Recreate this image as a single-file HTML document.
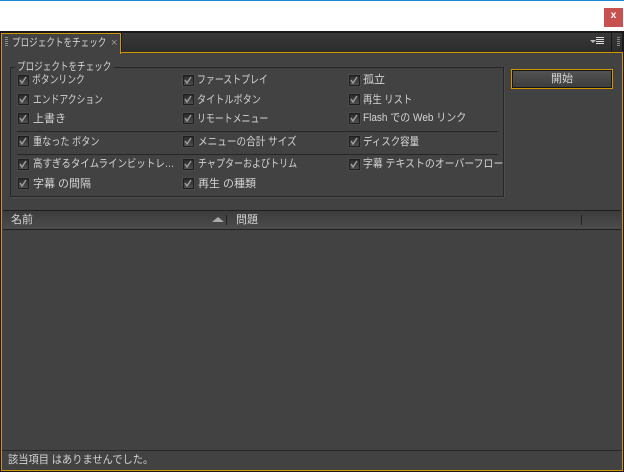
<!DOCTYPE html>
<html><head><meta charset="utf-8"><style>
html,body{margin:0;padding:0;background:#fff}
#r{position:relative;width:624px;height:472px;overflow:hidden;background:#fff;font-family:"Liberation Sans","WenQuanYi Zen Hei","Noto Sans CJK JP",sans-serif;font-size:11px;color:#d4d4d4}
#r div{position:absolute;box-sizing:border-box}
.t{white-space:nowrap;line-height:14px;height:14px;transform-origin:0 0}
.c{width:11px;height:11px;background:linear-gradient(#2a2a2a,#4e4e4e);border:1px solid #1f1f1f;box-shadow:0 0 0 1px #4a4a4a}
.c svg{position:absolute;left:0;top:0}
</style></head><body><div id="r">
<div style="left:0;top:0;width:624px;height:1px;background:#1a87d9"></div>
<div style="left:604px;top:8px;width:19px;height:19px;background:#c75050;color:#fff;font:bold 10px/18px 'Liberation Mono',monospace;text-align:center">x</div>
<div style="left:0;top:31px;width:624px;height:441px;background:#1a1a1a"></div>
<div style="left:122px;top:33px;width:500px;height:19px;background:linear-gradient(#383838,#2c2c2c)"></div>
<div style="left:611px;top:33px;width:1px;height:19px;background:#161616"></div>
<div style="left:1px;top:52px;width:622px;height:419px;background:#424242;border:1px solid #d39500"></div>
<div style="left:1px;top:33px;width:120px;height:21px;background:#424242;border:1px solid #d39500;border-bottom:0"></div>
<div style="left:5px;top:37px;width:3px;height:10px;background:repeating-linear-gradient(#8a8a8a 0 1px,transparent 1px 2px)"></div>
<div class="t" style="left:12px;top:36px;transform:scaleX(.78)">プロジェクトをチェック</div>
<div class="t" style="left:111px;top:36px;color:#9a9a9a">×</div>
<div style="left:590px;top:40px;width:0;height:0;border:3px solid transparent;border-top:3px solid #bbb"></div>
<div style="left:596px;top:37px;width:8px;height:8px;background:repeating-linear-gradient(#ddd 0 1px,#333 1px 2px)"></div>
<div style="left:617px;top:37px;width:3px;height:10px;background:repeating-linear-gradient(#888 0 1px,transparent 1px 2px)"></div>

<div style="left:10px;top:67px;width:494px;height:130px;border:1px solid #262626;box-shadow:1px 1px 0 #4e4e4e"></div>
<div style="left:15px;top:62px;width:99px;height:10px;background:#424242"></div>
<div class="t" style="left:17px;top:60px;transform:scaleX(.78)">プロジェクトをチェック</div>
<div style="left:17px;top:131px;width:481px;height:1px;background:#262626"></div>
<div style="left:17px;top:154px;width:481px;height:1px;background:#262626"></div>

<div class="c" style="left:18px;top:75px"><svg width="9" height="9"><path d="M1 4l2 3 4-6" fill="none" stroke="#a0a0a0" stroke-width="1.4"/></svg></div><div class="t" style="left:32px;top:73px;transform:scaleX(.8)">ボタンリンク</div>
<div class="c" style="left:18px;top:94px"><svg width="9" height="9"><path d="M1 4l2 3 4-6" fill="none" stroke="#a0a0a0" stroke-width="1.4"/></svg></div><div class="t" style="left:33px;top:93px;transform:scaleX(.8)">エンドアクション</div>
<div class="c" style="left:18px;top:113px"><svg width="9" height="9"><path d="M1 4l2 3 4-6" fill="none" stroke="#a0a0a0" stroke-width="1.4"/></svg></div><div class="t" style="left:33px;top:112px">上書き</div>
<div class="c" style="left:18px;top:136px"><svg width="9" height="9"><path d="M1 4l2 3 4-6" fill="none" stroke="#a0a0a0" stroke-width="1.4"/></svg></div><div class="t" style="left:33px;top:135px;transform:scaleX(.83)">重なった ボタン</div>
<div class="c" style="left:18px;top:159px"><svg width="9" height="9"><path d="M1 4l2 3 4-6" fill="none" stroke="#a0a0a0" stroke-width="1.4"/></svg></div><div class="t" style="left:33px;top:157px;transform:scaleX(.86)">高すぎるタイムラインビットレ…</div>
<div class="c" style="left:18px;top:178px"><svg width="9" height="9"><path d="M1 4l2 3 4-6" fill="none" stroke="#a0a0a0" stroke-width="1.4"/></svg></div><div class="t" style="left:33px;top:177px">字幕 の間隔</div>

<div class="c" style="left:183px;top:75px"><svg width="9" height="9"><path d="M1 4l2 3 4-6" fill="none" stroke="#a0a0a0" stroke-width="1.4"/></svg></div><div class="t" style="left:197px;top:73px;transform:scaleX(.81)">ファーストプレイ</div>
<div class="c" style="left:183px;top:94px"><svg width="9" height="9"><path d="M1 4l2 3 4-6" fill="none" stroke="#a0a0a0" stroke-width="1.4"/></svg></div><div class="t" style="left:197px;top:93px;transform:scaleX(.83)">タイトルボタン</div>
<div class="c" style="left:183px;top:113px"><svg width="9" height="9"><path d="M1 4l2 3 4-6" fill="none" stroke="#a0a0a0" stroke-width="1.4"/></svg></div><div class="t" style="left:197px;top:112px;transform:scaleX(.81)">リモートメニュー</div>
<div class="c" style="left:183px;top:136px"><svg width="9" height="9"><path d="M1 4l2 3 4-6" fill="none" stroke="#a0a0a0" stroke-width="1.4"/></svg></div><div class="t" style="left:198px;top:135px;transform:scaleX(.875)">メニューの合計 サイズ</div>
<div class="c" style="left:183px;top:159px"><svg width="9" height="9"><path d="M1 4l2 3 4-6" fill="none" stroke="#a0a0a0" stroke-width="1.4"/></svg></div><div class="t" style="left:198px;top:157px;transform:scaleX(.82)">チャプターおよびトリム</div>
<div class="c" style="left:183px;top:178px"><svg width="9" height="9"><path d="M1 4l2 3 4-6" fill="none" stroke="#a0a0a0" stroke-width="1.4"/></svg></div><div class="t" style="left:198px;top:177px">再生 の種類</div>

<div class="c" style="left:349px;top:75px"><svg width="9" height="9"><path d="M1 4l2 3 4-6" fill="none" stroke="#a0a0a0" stroke-width="1.4"/></svg></div><div class="t" style="left:363px;top:73px">孤立</div>
<div class="c" style="left:349px;top:94px"><svg width="9" height="9"><path d="M1 4l2 3 4-6" fill="none" stroke="#a0a0a0" stroke-width="1.4"/></svg></div><div class="t" style="left:363px;top:93px;transform:scaleX(.85)">再生 リスト</div>
<div class="c" style="left:349px;top:113px"><svg width="9" height="9"><path d="M1 4l2 3 4-6" fill="none" stroke="#a0a0a0" stroke-width="1.4"/></svg></div><div class="t" style="left:363px;top:111px;transform:scaleX(.91)">Flash での Web リンク</div>
<div class="c" style="left:349px;top:136px"><svg width="9" height="9"><path d="M1 4l2 3 4-6" fill="none" stroke="#a0a0a0" stroke-width="1.4"/></svg></div><div class="t" style="left:363px;top:135px;transform:scaleX(.86)">ディスク容量</div>
<div class="c" style="left:349px;top:159px"><svg width="9" height="9"><path d="M1 4l2 3 4-6" fill="none" stroke="#a0a0a0" stroke-width="1.4"/></svg></div><div class="t" style="left:363px;top:157px;transform:scaleX(.9)">字幕 テキストのオーバーフロー</div>

<div style="left:511px;top:69px;width:102px;height:20px;border:1px solid #d39500"></div>
<div class="t" style="left:512px;top:70px;width:100px;height:18px;line-height:16px;text-align:center;border:1px solid #161616;background:linear-gradient(#525252,#3e3e3e)">開始</div>

<div style="left:3px;top:210px;width:618px;height:20px;border-top:1px solid #1e1e1e;border-bottom:1px solid #1e1e1e;background:linear-gradient(#3c3c3c,#4c4c4c)"></div>
<div class="t" style="left:11px;top:213px">名前</div>
<div style="left:212px;top:217px;width:0;height:0;border:6px solid transparent;border-top:0;border-bottom:5px solid #aaa"></div>
<div style="left:226px;top:215px;width:1px;height:10px;background:#222"></div>
<div class="t" style="left:236px;top:213px">問題</div>
<div style="left:581px;top:215px;width:1px;height:10px;background:#222"></div>

<div style="left:2px;top:450px;width:620px;height:1px;background:#262626"></div>
<div class="t" style="left:8px;top:453px;transform:scaleX(.93)">該当項目 はありませんでした。</div>
</div></body></html>
